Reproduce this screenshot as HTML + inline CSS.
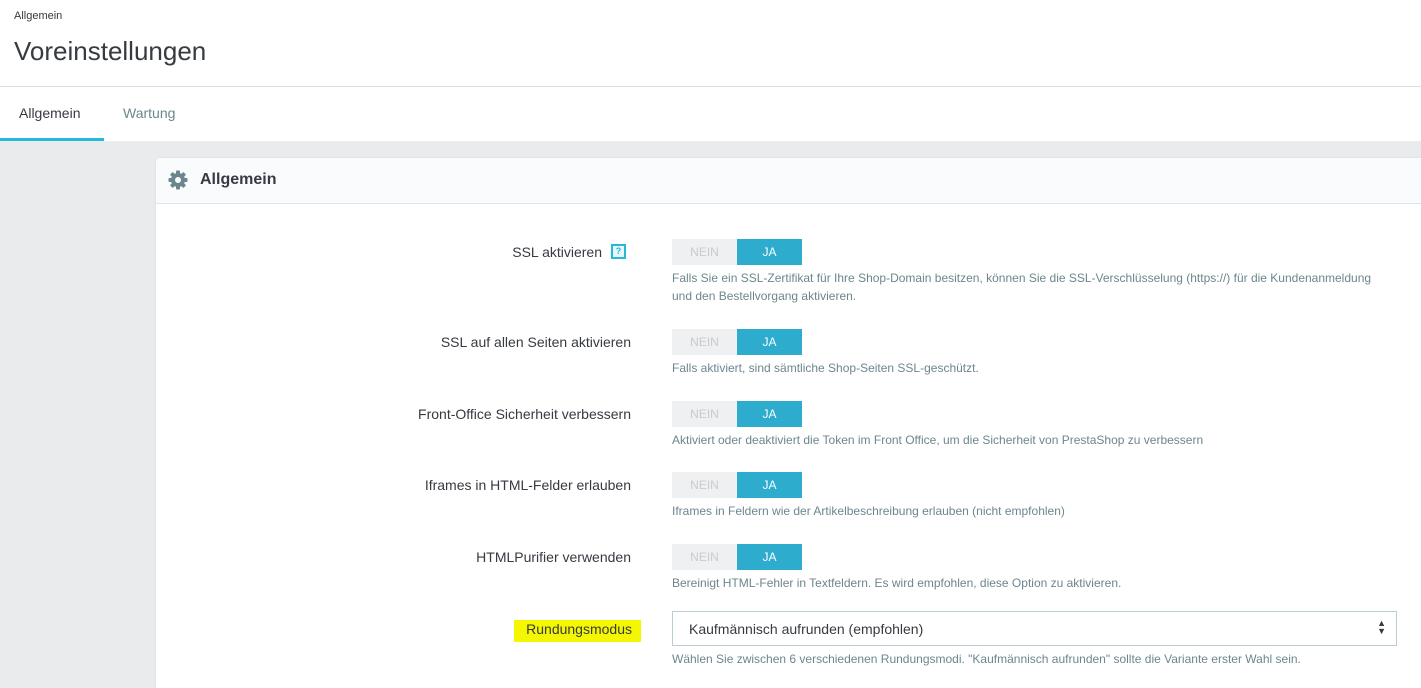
<!DOCTYPE html>
<html><head><meta charset="utf-8"><style>
body{margin:0;width:1421px;height:674px;overflow:hidden;font-family:"Liberation Sans",sans-serif;background:#eaebed;position:relative;color:#363a41}
.top{position:absolute;left:0;top:0;width:1421px;height:86px;background:#fff;border-bottom:1px solid #dcdfe3}
.bc{position:absolute;left:14px;top:10px;font-size:11px;color:#363a41}
h1{position:absolute;left:14px;top:36px;margin:0;font-weight:normal;font-size:26px;color:#363a41}
.tabs{position:absolute;left:0;top:87px;width:1421px;height:54px;background:#fff}
.tab{position:absolute;top:18px;font-size:14px}
.ul{position:absolute;left:0;top:51px;width:104px;height:3px;background:#25b9d7}
.panel{position:absolute;left:156px;top:158px;width:1280px;height:530px;background:#fff;border-top-left-radius:4px;box-shadow:0 0 2px #d5d8dc}
.ph{height:45px;background:#fafbfc;border-bottom:1px solid #dbe6e9;border-top-left-radius:4px;position:relative}
.ph span{position:absolute;left:44px;top:13px;font-size:16px;font-weight:bold;color:#363a41}
.lbl{position:absolute;right:790px;font-size:14px;color:#363a41;text-align:right}
.tg{position:absolute;left:672px;width:130px;height:26px;font-size:12px}
.tg .n{position:absolute;left:0;top:0;width:65px;height:26px;background:#eef0f2;color:#c7cbd0;text-align:center;line-height:26px}
.tg .y{position:absolute;left:65px;top:0;width:65px;height:26px;background:#2eacce;color:#fff;text-align:center;line-height:26px}
.hp{position:absolute;left:672px;font-size:12px;color:#6c868e;line-height:18px;width:740px}
.sel{position:absolute;left:672px;top:611px;width:723px;height:33px;border:1px solid #bbcdd2;background:#fff;font-size:14px}
</style></head><body>
<div class="top"><div class="bc">Allgemein</div><h1>Voreinstellungen</h1></div>
<div class="tabs"><div class="tab" style="left:19px">Allgemein</div><div class="tab" style="left:123px;color:#6c868e">Wartung</div><div class="ul"></div></div>
<div class="panel"><div class="ph">
<svg style="position:absolute;left:12px;top:12px" width="20" height="20" viewBox="0 0 20 20"><g fill="#6c868e"><circle cx="10" cy="10" r="7"/><rect x="8" y="0.5" width="4" height="19" rx="1"/><rect x="8" y="0.5" width="4" height="19" rx="1" transform="rotate(45 10 10)"/><rect x="8" y="0.5" width="4" height="19" rx="1" transform="rotate(90 10 10)"/><rect x="8" y="0.5" width="4" height="19" rx="1" transform="rotate(135 10 10)"/></g><circle cx="10" cy="10" r="3" fill="#fafbfc"/></svg>
<span>Allgemein</span></div></div>
<div class="lbl" style="top:244px;right:819px">SSL aktivieren</div>
<div style="position:absolute;left:611px;top:244px;width:15px;height:15px;border:2px solid #25b9d7;box-sizing:border-box;background:#e6f6fa;font-size:9px;color:#25b9d7;text-align:center;line-height:11px;font-weight:bold">?</div>
<div class="tg" style="top:239px"><div class="n">NEIN</div><div class="y">JA</div></div>
<div class="hp" style="top:269px">Falls Sie ein SSL-Zertifikat für Ihre Shop-Domain besitzen, können Sie die SSL-Verschlüsselung (https://) für die Kundenanmeldung<br>und den Bestellvorgang aktivieren.</div>
<div class="lbl" style="top:334px">SSL auf allen Seiten aktivieren</div>
<div class="tg" style="top:329px"><div class="n">NEIN</div><div class="y">JA</div></div>
<div class="hp" style="top:359px">Falls aktiviert, sind sämtliche Shop-Seiten SSL-geschützt.</div>
<div class="lbl" style="top:406px">Front-Office Sicherheit verbessern</div>
<div class="tg" style="top:401px"><div class="n">NEIN</div><div class="y">JA</div></div>
<div class="hp" style="top:431px">Aktiviert oder deaktiviert die Token im Front Office, um die Sicherheit von PrestaShop zu verbessern</div>
<div class="lbl" style="top:477px">Iframes in HTML-Felder erlauben</div>
<div class="tg" style="top:472px"><div class="n">NEIN</div><div class="y">JA</div></div>
<div class="hp" style="top:502px">Iframes in Feldern wie der Artikelbeschreibung erlauben (nicht empfohlen)</div>
<div class="lbl" style="top:549px">HTMLPurifier verwenden</div>
<div class="tg" style="top:544px"><div class="n">NEIN</div><div class="y">JA</div></div>
<div class="hp" style="top:574px">Bereinigt HTML-Fehler in Textfeldern. Es wird empfohlen, diese Option zu aktivieren.</div>
<div style="position:absolute;left:514px;top:620px;width:127px;height:22px;background:#f4f700"></div>
<div class="lbl" style="top:621px;right:789px">Rundungsmodus</div>
<div class="sel"><span style="position:absolute;left:16px;top:9px">Kaufmännisch aufrunden (empfohlen)</span><span style="position:absolute;right:10px;top:7px;font-size:9px;line-height:8px">▲<br>▼</span></div>
<div class="hp" style="top:650px">Wählen Sie zwischen 6 verschiedenen Rundungsmodi. "Kaufmännisch aufrunden" sollte die Variante erster Wahl sein.</div>
</body></html>
